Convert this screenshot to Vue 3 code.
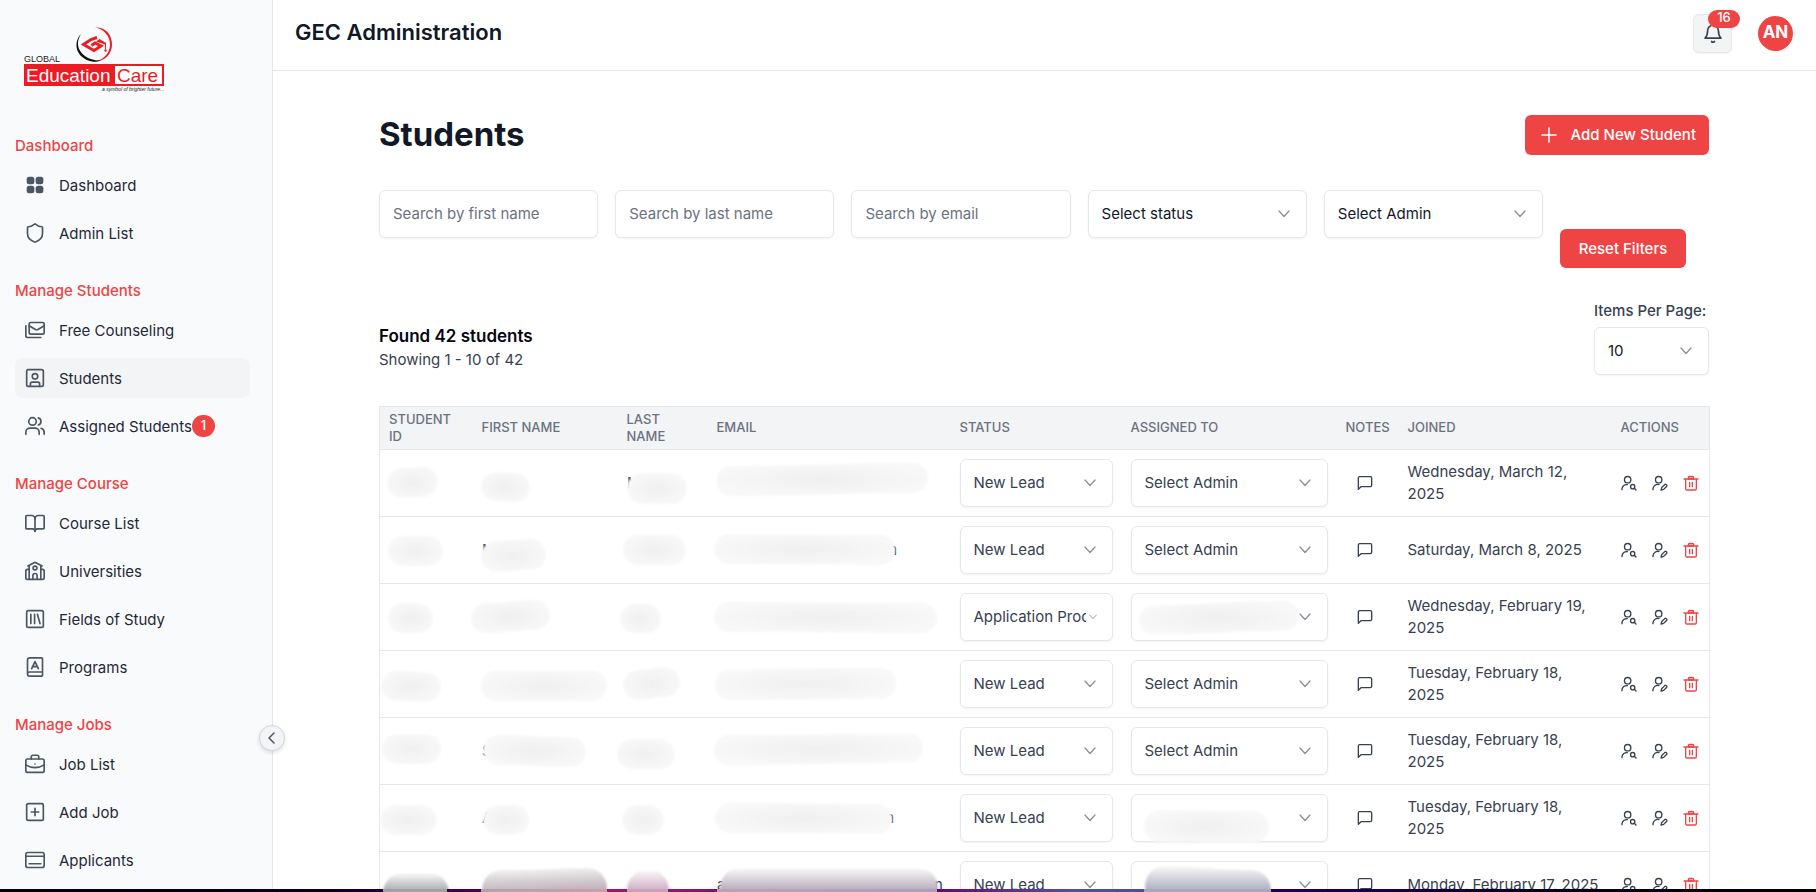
<script setup>
import { ref } from 'vue'

const icons = {
  grid: '<g fill="currentColor" stroke="none"><rect x="2" y="2" width="9.2" height="9.2" rx="3"/><rect x="12.8" y="2" width="9.2" height="9.2" rx="3"/><rect x="2" y="12.8" width="9.2" height="9.2" rx="3"/><rect x="12.8" y="12.8" width="9.2" height="9.2" rx="3"/></g>',
  shield: '<path d="M21 13c0 5-3.8 8-8.300 9.700a2 2 0 0 1-1.400 0C6.800 21 3 18 3 13V5.500a1 1 0 0 1 1-1c2.300 0 5-1.200 7-2.900a1.500 1.500 0 0 1 2 0c2 1.700 4.700 2.900 7 2.900a1 1 0 0 1 1 1z"/>',
  mails: '<rect width="18" height="14" x="5" y="3" rx="2"/><path d="m5 7 7.500 4.300a3 3 0 0 0 3 0L23 7"/><path d="M1 7v12a2 2 0 0 0 2 2h16"/>',
  student: '<rect width="20" height="20" x="2" y="2" rx="2"/><circle cx="12" cy="10" r="3.300"/><path d="M6.500 22v-3a2 2 0 0 1 2-2h7a2 2 0 0 1 2 2v3"/>',
  users: '<path d="M17 22v-2.500a5 5 0 0 0-5-5H6a5 5 0 0 0-5 5V22"/><circle cx="9" cy="6.500" r="4.500"/><path d="M23 22v-2.500a5 5 0 0 0-3.700-4.800"/><path d="M16 2.200a4.500 4.500 0 0 1 0 8.600"/>',
  book: '<path d="M12 6.500V22"/><path d="M2 19a1 1 0 0 1-1-1V4a1 1 0 0 1 1-1h6a4 4 0 0 1 4 4 4 4 0 0 1 4-4h6a1 1 0 0 1 1 1v14a1 1 0 0 1-1 1h-7a3 3 0 0 0-3 3 3 3 0 0 0-3-3z"/>',
  school: '<path d="M14.500 22v-4.500a2.500 2.500 0 0 0-5 0V22"/><path d="M5 6v16M19 6v16"/><path d="m3.500 6 7.400-4a2.400 2.400 0 0 1 2.200 0l7.400 4"/><path d="M5 10H3a2 2 0 0 0-2 2v8a2 2 0 0 0 2 2h18a2 2 0 0 0 2-2v-8a2 2 0 0 0-2-2h-2"/><circle cx="12" cy="8.500" r="2.300"/>',
  library: '<rect width="20" height="20" x="2" y="2" rx="2"/><path d="M7 6.500v11M11.500 6.500v11M15 6.500l3 11"/>',
  program: '<path d="M3 20V3.500A2.500 2.500 0 0 1 5.500 1H20a1 1 0 0 1 1 1v20a1 1 0 0 1-1 1H5.500a2.500 2.500 0 0 1 0-5H21"/><path d="m8 14 4-8.500 4 8.500M9.200 11.500h5.600"/>',
  briefcase: '<path d="M12 12h.01"/><path d="M16.500 6V3.500a2 2 0 0 0-2-2h-5a2 2 0 0 0-2 2V6"/><path d="M23 13a20 20 0 0 1-22 0"/><rect width="22" height="16" x="1" y="6" rx="2"/>',
  plusbox: '<rect width="20" height="20" x="2" y="2" rx="2"/><path d="M7.500 12h9M12 7.500v9"/>',
  applicants: '<rect width="22" height="18" x="1" y="3" rx="2.500"/><path d="M1 7.500h22M5 16.500h14"/>',
  bell: '<path d="M10.300 21a2 2 0 0 0 3.400 0"/><path d="M2.500 17h19c-1.800-1.800-3-3.500-3-9a6.500 6.500 0 0 0-13 0c0 5.500-1.200 7.200-3 9z"/>',
  message: '<path d="M22 15.500a2 2 0 0 1-2 2H6l-4 4V4.500a2 2 0 0 1 2-2h16a2 2 0 0 1 2 2z"/>',
  view: '<circle cx="10" cy="7" r="4.800"/><path d="M1.500 22v-1.500a7 7 0 0 1 8-6"/><circle cx="17.500" cy="17.500" r="3.200"/><path d="m22.500 22.500-2.500-2.500"/>',
  edit: '<circle cx="10" cy="7" r="4.800"/><path d="M1.500 22v-1.500a7 7 0 0 1 9-6"/><path d="M21.800 14.600a1.900 1.900 0 0 0-2.700-.2l-4.400 4.400-1.200 4 4-1.200 4.300-4.300a1.900 1.900 0 0 0 0-2.700z"/>',
  trash: '<path fill="#fca5a5" d="M8 6V4a2 2 0 0 1 2-2h4a2 2 0 0 1 2 2v2z"/><path d="M1.500 6h21M20 6v14.500a2 2 0 0 1-2 2H6a2 2 0 0 1-2-2V6M10 11v6.500M14 11v6.500"/>',
}

const sections = [
  { title: 'Dashboard', items: [{ label: 'Dashboard', icon: 'grid' }, { label: 'Admin List', icon: 'shield' }] },
  {
    title: 'Manage Students',
    items: [
      { label: 'Free Counseling', icon: 'mails' },
      { label: 'Students', icon: 'student', active: true },
      { label: 'Assigned Students', icon: 'users', badge: 1 },
    ],
  },
  {
    title: 'Manage Course',
    items: [
      { label: 'Course List', icon: 'book' },
      { label: 'Universities', icon: 'school' },
      { label: 'Fields of Study', icon: 'library' },
      { label: 'Programs', icon: 'program' },
    ],
  },
  {
    title: 'Manage Jobs',
    items: [
      { label: 'Job List', icon: 'briefcase' },
      { label: 'Add Job', icon: 'plusbox' },
      { label: 'Applicants', icon: 'applicants' },
    ],
  },
]

const textFilters = [
  { id: 'first', placeholder: 'Search by first name' },
  { id: 'last', placeholder: 'Search by last name' },
  { id: 'email', placeholder: 'Search by email' },
]
const values = ref({ first: '', last: '', email: '' })

const columns = [
  { key: 'id', label: 'Student ID' },
  { key: 'first', label: 'First Name' },
  { key: 'last', label: 'Last Name' },
  { key: 'email', label: 'Email' },
  { key: 'status', label: 'Status' },
  { key: 'assigned', label: 'Assigned To' },
  { key: 'notes', label: 'Notes' },
  { key: 'joined', label: 'Joined' },
  { key: 'actions', label: 'Actions' },
]

// Each smudge is drawn in its cell's own canvas: d is the outline, head / tail are letters left uncovered.
const pill = (x, y, w, h, lift = 0) => {
  const r = h / 2
  const m = x + w / 2
  const e = x + w - r
  return `M${x + r} ${y}C${m} ${y} ${m} ${y + lift} ${e} ${y + lift}A${r} ${r} 0 0 1 ${e} ${y + h + lift}C${m} ${y + h + lift} ${m} ${y + h} ${x + r} ${y + h}A${r} ${r} 0 0 1 ${x + r} ${y}Z`
}
const s = (x, y, w, h, lift = 0, extra = {}) => ({ d: pill(x, y, w, h, lift), ...extra })

const rows = [
  {
    hidden: [s(-2, 9, 51, 30, -1), s(-1, 13, 49, 29, 1), s(0, 14, 60, 31, 0, { head: 'M' }), s(-1, 7, 212, 30, -3)],
    status: 'New Lead', assigned: 'Select Admin', joined: 'Wednesday, March 12, 2025',
  },
  {
    hidden: [s(-1, 10, 55, 30, 0), s(-1, 15, 65, 31, -2, { head: 'M' }), s(-4, 9, 63, 30), s(-3, 8, 181, 30, 1, { tail: 'm', tx: 167 })],
    status: 'New Lead', assigned: 'Select Admin', joined: 'Saturday, March 8, 2025',
  },
  {
    hidden: [s(-1, 10, 45, 30), s(-11, 10, 79, 30, -3), s(-7, 11, 41, 29), s(-3, 9, 223, 30, 1)],
    status: 'Application Processing', assigned: '', smudge: s(8, 12, 160, 30, -4), joined: 'Wednesday, February 19, 2025',
  },
  {
    hidden: [s(-8, 11, 60, 30, 1), s(-1, 11, 126, 30), s(-4, 10, 57, 30, -3), s(-2, 9, 181, 31, -1)],
    status: 'New Lead', assigned: 'Select Admin', joined: 'Tuesday, February 18, 2025',
  },
  {
    hidden: [s(-7, 7, 59, 30), s(1, 8, 103, 30, 2, { head: 'S' }), s(-10, 12, 58, 30), s(-3, 8, 209, 30, -2)],
    status: 'New Lead', assigned: 'Select Admin', joined: 'Tuesday, February 18, 2025',
  },
  {
    hidden: [s(-9, 11, 57, 30), s(1, 11, 46, 30, 0, { head: 'A' }), s(-5, 11, 42, 30), s(-2, 9, 177, 30, 1, { tail: 'm', tx: 164 })],
    status: 'New Lead', assigned: '', smudge: s(13, 16, 125, 32, 1), joined: 'Tuesday, February 18, 2025',
  },
  {
    hidden: [
      s(-6, 12, 66, 40, 0, { fill: 'url(#smear-grey)' }),
      s(0, 9, 125, 40, -2, { fill: 'url(#smear-rose)' }),
      s(0, 9, 42, 40, 0, { fill: 'url(#smear-pink)' }),
      s(3, 7, 218, 40, 0, { fill: 'url(#smear-violet)', head: 'a', tail: 'n', tx: 217 }),
    ],
    status: 'New Lead', assigned: '', smudge: s(14, 5, 126, 40, 4, { fill: 'url(#smear-blue)' }), joined: 'Monday, February 17, 2025',
  },
]
</script>

<template>
  <svg class="defs" aria-hidden="true">
    <defs>
      <radialGradient id="smudge-fill">
        <stop offset="0" stop-color="#f0f0f0" />
        <stop offset="0.6" stop-color="#f4f4f4" />
        <stop offset="1" stop-color="#f8f8f8" />
      </radialGradient>
      <linearGradient id="smear-grey" x2="0" y2="1"><stop offset="0" stop-color="#fafafa" /><stop offset="0.5" stop-color="#a0a2a5" /></linearGradient>
      <linearGradient id="smear-rose" x2="0.1" y2="1"><stop offset="0" stop-color="#fafafa" /><stop offset="0.3" stop-color="#d8d4d7" /><stop offset="0.7" stop-color="#b9a4ae" /></linearGradient>
      <linearGradient id="smear-pink" x2="0" y2="1"><stop offset="0" stop-color="#fafafa" /><stop offset="0.6" stop-color="#c9a3bb" /></linearGradient>
      <linearGradient id="smear-violet" x2="0" y2="1"><stop offset="0" stop-color="#fafafa" /><stop offset="0.6" stop-color="#b3a6b8" /></linearGradient>
      <linearGradient id="smear-blue" x2="0" y2="1"><stop offset="0" stop-color="#fafafa" /><stop offset="0.6" stop-color="#a7a8bd" /></linearGradient>
      <filter id="soft" x="-10%" y="-20%" width="120%" height="140%"><feGaussianBlur stdDeviation="0.800" /></filter>
    </defs>
  </svg>

  <div class="app">
    <aside class="sidebar">
      <a class="logo" href="#" aria-label="Global Education Care">
        <svg viewBox="0 0 140 66" width="140" height="66">
          <path fill="#ed1c24" d="M71 0.500C82 0 88 8 88 17.500C88 28 79 36 68 34.500C78 34.500 86 27 86 17.500C86 9 80 2 71 0.500Z" />
          <path fill="#111" d="M57 7C49 15 51 31 68 34.500C72 35 75 34.500 77 33.500C65 34 55 27 54 18C53.600 14 55 10 57 7Z" />
          <path fill="none" stroke="#ed1c24" stroke-width="3" d="M73 10.500L67 12.500L59.500 17.500L70 23.500L77 19L71 16L67.500 18.500" />
          <path fill="#ed1c24" d="M72 14.500L75.500 12L82 16V22H81V17.500Z" />
          <circle cx="81.500" cy="23.500" r="1.200" fill="#ed1c24" />
          <text x="0" y="35" font-size="9" fill="#222">GLOBAL</text>
          <rect x="0" y="37" width="140" height="22" fill="#ed1c24" />
          <rect x="91" y="39" width="47" height="18" fill="#fff" />
          <text x="2" y="55" font-size="19" fill="#fff">Education</text>
          <text x="93" y="55" font-size="19" fill="#ed1c24">Care</text>
          <text x="78" y="64" font-size="5" font-style="italic" fill="#222">a symbol of brighter future...</text>
        </svg>
      </a>
      <nav class="nav" aria-label="Main">
        <section v-for="sec in sections" :key="sec.title" class="nav-section">
          <h2>{{ sec.title }}</h2>
          <a v-for="item in sec.items" :key="item.label" href="#" class="nav-item" :class="{ active: item.active }">
            <svg class="icon nav-icon" viewBox="0 0 24 24" v-html="icons[item.icon]" />
            <span>{{ item.label }}</span>
            <b v-if="item.badge" class="count">{{ item.badge }}</b>
          </a>
        </section>
      </nav>
      <button class="collapse" type="button" aria-label="Collapse sidebar">
        <svg viewBox="0 0 12 12" width="12" height="12"><path d="M8 1L3 6L8 11" /></svg>
      </button>
    </aside>

    <div class="main">
      <header class="topbar">
        <h1>GEC Administration</h1>
        <div class="top-actions">
          <button class="bell" type="button" aria-label="Notifications">
            <svg class="icon" width="20" height="20" viewBox="0 0 24 24" v-html="icons.bell" />
            <span class="bell-count">16</span>
          </button>
          <button class="avatar" type="button">AN</button>
        </div>
      </header>

      <main class="content">
        <div class="title-row">
          <h2>Students</h2>
          <button class="primary add" type="button">
            <svg viewBox="0 0 16 16" width="16" height="16"><path d="M8 1V15M1 8H15" /></svg>
            Add New Student
          </button>
        </div>

        <form class="filters" @submit.prevent>
          <input v-for="f in textFilters" :key="f.id" v-model="values[f.id]" class="field" type="text" :placeholder="f.placeholder" :aria-label="f.placeholder" />
          <span v-for="label in ['Select status', 'Select Admin']" :key="label" class="select">
            <select class="field" :aria-label="label"><option>{{ label }}</option></select>
            <svg class="chevron" viewBox="0 0 12 8"><path d="M1 1L6 6.500L11 1" /></svg>
          </span>
          <button class="primary reset" type="reset">Reset Filters</button>
        </form>

        <div class="summary">
          <div>
            <p class="found">Found 42 students</p>
            <p class="showing">Showing 1 - 10 of 42</p>
          </div>
          <div class="per-page">
            <label for="per-page">Items Per Page:</label>
            <span class="select">
              <select id="per-page" class="field"><option>10</option></select>
              <svg class="chevron" viewBox="0 0 12 8"><path d="M1 1L6 6.500L11 1" /></svg>
            </span>
          </div>
        </div>

        <table class="students">
          <colgroup><col v-for="c in columns" :key="c.key" :class="'col-' + c.key" /></colgroup>
          <thead>
            <tr><th v-for="c in columns" :key="c.key" scope="col">{{ c.label }}</th></tr>
          </thead>
          <tbody>
            <tr v-for="(row, i) in rows" :key="i">
              <td v-for="(h, k) in row.hidden" :key="k">
                <svg class="smudge" aria-hidden="true">
                  <text v-if="h.head" x="0" y="29">{{ h.head }}</text>
                  <text v-if="h.tail" :x="h.tx" y="29">{{ h.tail }}</text>
                  <path :d="h.d" :fill="h.fill || 'url(#smudge-fill)'" filter="url(#soft)" />
                </svg>
              </td>
              <td>
                <span class="select" :class="{ tight: row.status.length > 12 }">
                  <select class="field" aria-label="Status"><option>{{ row.status }}</option></select>
                  <svg class="chevron" viewBox="0 0 12 8"><path d="M1 1L6 6.500L11 1" /></svg>
                </span>
              </td>
              <td>
                <span class="select">
                  <select class="field" aria-label="Assigned to"><option>{{ row.assigned }}</option></select>
                  <svg class="chevron" viewBox="0 0 12 8"><path d="M1 1L6 6.500L11 1" /></svg>
                  <svg v-if="row.smudge" class="smudge over" aria-hidden="true">
                    <path :d="row.smudge.d" :fill="row.smudge.fill || 'url(#smudge-fill)'" filter="url(#soft)" />
                  </svg>
                </span>
              </td>
              <td>
                <button class="ghost note" type="button" aria-label="Notes"><svg class="icon" viewBox="0 0 24 24" v-html="icons.message" /></button>
              </td>
              <td class="joined">{{ row.joined }}</td>
              <td>
                <div class="actions">
                  <button class="ghost" type="button" aria-label="View"><svg class="icon" viewBox="0 0 24 24" v-html="icons.view" /></button>
                  <button class="ghost" type="button" aria-label="Edit"><svg class="icon" viewBox="0 0 24 24" v-html="icons.edit" /></button>
                  <button class="ghost danger" type="button" aria-label="Delete"><svg class="icon" viewBox="0 0 24 24" v-html="icons.trash" /></button>
                </div>
              </td>
            </tr>
          </tbody>
        </table>
      </main>
    </div>
    <div class="edge" />
  </div>
</template>

<style>
body { overflow: hidden; }
</style>

<style scoped>
.app, .app * { box-sizing: border-box; }
.defs { position: absolute; width: 0; height: 0; }
.app {
  height: 100vh;
  display: grid;
  grid-template: minmax(0, 1fr) 3px / 273px minmax(0, 1fr);
  font-family: Inter, "Noto Sans", sans-serif;
  font-size: 15px;
  color: #374151;
  background: #fff;
}
button, input, select { font: inherit; }
button { cursor: pointer; border: 0; padding: 0; }
h1, h2, p { margin: 0; }
a { color: inherit; text-decoration: none; }
.icon { fill: none; stroke: currentColor; stroke-width: 2; stroke-linecap: round; stroke-linejoin: round; }

.sidebar { position: relative; background: #f9fafb; border-right: 1px solid #e5e7eb; min-height: 0; }
.logo { display: block; padding: 27px 24px 0; }
.logo svg { display: block; font-family: "Liberation Sans", Arial, sans-serif; }
.nav { padding: 42px 22px 0 15px; }
.nav-section { display: flex; flex-direction: column; gap: 8px; margin-bottom: 27px; }
.nav-section h2 { font-size: 15px; line-height: 22px; font-weight: 500; color: #ef4444; }
.nav-item { display: flex; align-items: center; height: 40px; padding: 0 10px; border-radius: 8px; color: #1f2937; }
.nav-item.active { background: #f3f4f6; }
.nav-icon { width: 20px; height: 20px; margin-right: 14px; color: #4b5563; flex: none; }
.count {
  width: 23px; height: 22px; border-radius: 11px; background: #ef4444; color: #fff;
  font-size: 13px; line-height: 20px; font-weight: 500; text-align: center;
}
.collapse {
  position: absolute; right: -13px; bottom: 138px; width: 26px; height: 26px; border-radius: 50%;
  display: grid; place-items: center; background: #f3f4f6; border: 1px solid #d1d5db; box-shadow: 0 2px 4px rgb(0 0 0 / 12%);
}
.collapse path { fill: none; stroke: #4b5563; stroke-width: 1.500; stroke-linecap: round; stroke-linejoin: round; }

.main { min-width: 0; min-height: 0; overflow: hidden; }
.topbar { display: flex; justify-content: space-between; height: 71px; padding: 14px 23px 0 22px; border-bottom: 1px solid #e5e7eb; }
.topbar h1 { font-size: 22px; line-height: 36px; font-weight: 600; color: #111827; }
.top-actions { display: flex; gap: 26px; }
.bell {
  position: relative; width: 39px; height: 39px; border: 1px solid #e5e7eb; border-radius: 6px;
  background: #f3f4f6; color: #374151; display: grid; place-items: center; box-shadow: 0 1px 2px rgb(0 0 0 / 5%);
}
.bell-count {
  position: absolute; left: 14px; top: -5px; width: 32px; height: 18px; border-radius: 9px;
  background: #ef4444; color: #fff; font-size: 13px; line-height: 15px; font-weight: 500;
}
.avatar { width: 35px; height: 35px; margin-top: 2px; padding-bottom: 3px; border-radius: 50%; background: #ef4444; color: #fff; font-size: 17px; line-height: 20px; font-weight: 700; }

.content { padding: 44px 107px 0 106px; }
.title-row { display: flex; justify-content: space-between; align-items: center; height: 40px; }
.title-row h2 { font-size: 33px; line-height: 38px; padding-bottom: 2px; font-weight: 700; color: #111827; }
.primary { background: #ef4444; color: #fff; font-weight: 500; border-radius: 6px; height: 39px; }
.add { display: flex; align-items: center; gap: 14px; height: 40px; padding: 0 13px 1px 16px; }
.add path { stroke: #fff; stroke-width: 1.500; stroke-linecap: round; }

.filters { display: grid; grid-template-columns: repeat(5, minmax(0, 1fr)) 149px; column-gap: 17px; align-items: start; margin-top: 35px; }
.field {
  display: block; width: 100%; height: 48px; padding: 0 14px 1px 13px; border: 1px solid #e5e7eb; border-radius: 6px;
  background: #fff; color: #111827; box-shadow: 0 1px 2px rgb(0 0 0 / 5%); outline: 0;
}
.field::placeholder { color: #6b7280; opacity: 1; }
.select { position: relative; display: block; }
.select .field { appearance: none; padding-right: 26px; }
.chevron { position: absolute; right: 17px; top: 50%; width: 12px; height: 8px; margin-top: -4px; pointer-events: none; fill: none; stroke: #8b9099; stroke-width: 1.300; stroke-linecap: round; stroke-linejoin: round; }
.tight .chevron { width: 8px; right: 16px; }
.reset { width: 126px; margin-top: 39px; }

.summary { display: flex; justify-content: space-between; align-items: flex-end; margin-top: 31px; }
.found { font-size: 17px; line-height: 24px; font-weight: 600; color: #030712; }
.showing { line-height: 24px; padding-bottom: 3px; }
.per-page { width: 115px; white-space: nowrap; }
.per-page label { display: block; line-height: 24px; margin-bottom: 4px; font-weight: 500; }

.students { width: 100%; margin-top: 31px; table-layout: fixed; border-collapse: collapse; border: 1px solid #e5e7eb; }
.col-id { width: 93px; }
.col-first { width: 145px; }
.col-last { width: 90px; }
.col-email { width: 243px; }
.col-status { width: 171px; }
.col-assigned { width: 215px; }
.col-notes { width: 62px; }
.col-joined { width: 213px; }
.col-actions { width: 98px; }
.students th {
  height: 43px; padding: 0 9px 1px; background: #f3f4f6; color: #6b7280; text-align: left;
  text-transform: uppercase; font-size: 13px; line-height: 17px; font-weight: 500;
}
.students tr { border-bottom: 1px solid #e5e7eb; }
.students td { height: 67px; padding: 0 9px; color: #374151; }
.students td .field { color: #374151; }
.students .joined { line-height: 22px; }
.smudge { display: block; width: 100%; height: 48px; overflow: visible; font-size: 15px; }
.smudge text { fill: #374151; }
.smudge.over { position: absolute; inset: 0; pointer-events: none; }
.ghost { display: block; width: 16px; height: 16px; background: none; color: #374151; }
.ghost svg { display: block; width: 16px; height: 16px; }
.note { margin: 0 auto 0 11px; }
.actions { display: flex; gap: 15px; }
.ghost.danger { color: #ef4444; }

.edge {
  grid-column: 1 / -1;
  background: linear-gradient(90deg,
    #000010 0%, #08001c 18%, #1c0030 21.100%, #a0a2a5 21.100%, #a0a2a5 24.600%, #3a0048 24.600%, #4a0050 26.500%,
    #aaa5ab 26.500%, #c6a0b2 33.400%, #9b1768 33.400%, #98186e 34.500%, #c9a3bb 34.500%, #c9a3bb 36.800%, #961570 36.800%, #7d136f 39.500%,
    #b8a3b6 39.500%, #a9a3ba 51.600%, #5c0b78 51.600%, #5b2d86 55%, #50509c 59%, #4b4f99 63%, #a7a8bd 63%, #a7a8bd 70%, #1c0060 70%, #120048 77%, #02001a 85%, #000008 100%);
}
</style>
